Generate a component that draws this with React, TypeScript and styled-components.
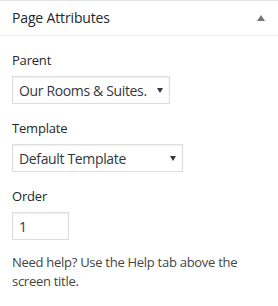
import React from "react";
import styled, { createGlobalStyle } from "styled-components";

const Global = createGlobalStyle`
  html, body { margin: 0; padding: 0; background: #fff; }
  body { font-family: "Open Sans", "Noto Sans", sans-serif; }
`;

const Box = styled.div`
  width: 278px;
  height: 306px;
  box-sizing: border-box;
  border-top: 1px solid #e5e5e5;
  background: #fff;
  overflow: hidden;
`;

const Header = styled.div`
  display: flex;
  align-items: center;
  justify-content: space-between;
  height: 34px;
  padding: 0 12px;
  border-bottom: 1px solid #eee;
`;

const Title = styled.h2`
  margin: 0;
  font-size: 14px;
  font-weight: 400;
  letter-spacing: -0.15px;
  color: #23282d;
  line-height: 20px;
`;

const Toggle = styled.span`
  display: flex;
  width: 8px;
  height: 6px;
  margin-right: 1px;
`;

const Inside = styled.div`
  display: flex;
  flex-direction: column;
  padding: 0 12px 12px;
`;

const Label = styled.label<{ $top: number }>`
  display: block;
  margin-top: ${(p) => p.$top}px;
  font-size: 13px;
  line-height: 18px;
  letter-spacing: -0.2px;
  color: #23282d;
`;

const Field = styled.div<{ $width: number }>`
  position: relative;
  margin-top: 7px;
  width: ${(p) => p.$width}px;
`;

const Select = styled.select`
  appearance: none;
  -webkit-appearance: none;
  width: 100%;
  height: 28px;
  box-sizing: border-box;
  margin: 0;
  padding: 0 16px 0 6px;
  border: 1px solid #ddd;
  border-radius: 0;
  box-shadow: inset 0 1px 2px rgba(0, 0, 0, 0.07);
  background: #fff;
  font-family: inherit;
  font-size: 14px;
  letter-spacing: -0.35px;
  color: #32373c;
  outline: none;
`;

const Caret = styled.svg`
  position: absolute;
  right: 7px;
  top: 11px;
  width: 6px;
  height: 6px;
  pointer-events: none;
`;

const Input = styled.input`
  width: 57px;
  height: 28px;
  box-sizing: border-box;
  margin: 0;
  padding: 0 6px;
  border: 1px solid #ddd;
  box-shadow: inset 0 1px 2px rgba(0, 0, 0, 0.07);
  font-family: inherit;
  font-size: 14px;
  color: #32373c;
  outline: none;
`;

const Help = styled.p`
  margin: 13px 0 0;
  font-size: 13px;
  line-height: 19px;
  letter-spacing: -0.28px;
  color: #444;
`;

const SelectField = ({ width, value }: { width: number; value: string }) => (
  <Field $width={width}>
    <Select defaultValue={value}>
      <option>{value}</option>
    </Select>
    <Caret viewBox="0 0 6 6">
      <path d="M0 1 L6 1 L3 6 Z" fill="#32373c" />
    </Caret>
  </Field>
);

export default function App() {
  return (
    <>
      <Global />
      <Box>
        <Header>
          <Title>Page Attributes</Title>
          <Toggle>
            <svg width="8" height="6" viewBox="0 0 8 6">
              <path d="M0 6 L8 6 L4 0 Z" fill="#72777c" />
            </svg>
          </Toggle>
        </Header>
        <Inside>
          <Label $top={15}>Parent</Label>
          <SelectField width={158} value="Our Rooms & Suites." />
          <Label $top={15}>Template</Label>
          <SelectField width={171} value="Default Template" />
          <Label $top={15}>Order</Label>
          <Field $width={57}>
            <Input defaultValue="1" />
          </Field>
          <Help>Need help? Use the Help tab above the screen title.</Help>
        </Inside>
      </Box>
    </>
  );
}
